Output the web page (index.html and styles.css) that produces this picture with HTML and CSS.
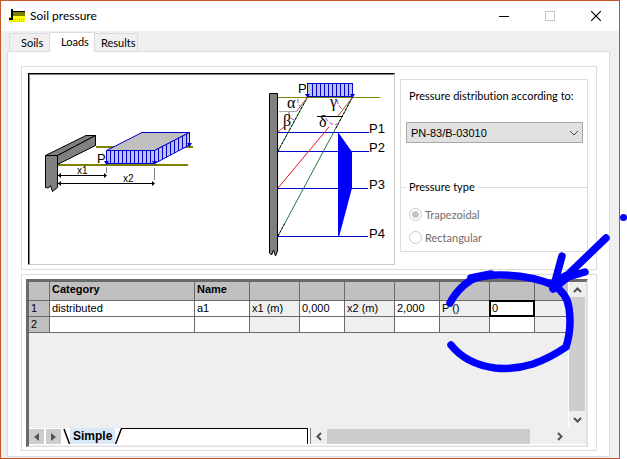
FILE: index.html
```html
<!DOCTYPE html>
<html lang="en">
<head>
<meta charset="utf-8">
<title>Soil pressure</title>
<link rel="stylesheet" href="styles.css">
</head>
<body>
<div class="window">
  <header class="titlebar">
    <svg class="app-icon" width="16" height="14" viewBox="0 0 16 14" shape-rendering="crispEdges" aria-hidden="true">
      <defs><pattern id="soil" width="2" height="2" patternUnits="userSpaceOnUse"><rect width="2" height="2" fill="#ff0"/><rect width="1" height="1" fill="#c8c820"/></pattern></defs>
      <rect y="8" width="16" height="5" fill="url(#soil)"/>
      <rect x="4" y="7" width="12" height="3" fill="#ff0"/>
      <rect x="4" y="2" width="12" height="5" fill="#808000"/>
      <rect x="4" y="2" width="12" height="1" fill="#000"/>
      <rect x="2" y="0" width="2" height="10" fill="#000"/>
      <rect x="0" y="9" width="4" height="2" fill="#000"/>
    </svg>
    <h1 class="title">Soil pressure</h1>
    <div class="window-buttons">
      <button class="window-button" aria-label="Minimize"><svg width="10" height="10" viewBox="0 0 10 10"><path d="M0 5.500H10" stroke="#000"/></svg></button>
      <button class="window-button" aria-label="Maximize" disabled><svg width="10" height="10" viewBox="0 0 10 10"><rect x=".5" y=".5" width="9" height="9" fill="none" stroke="#c4c4c4"/></svg></button>
      <button class="window-button" aria-label="Close"><svg width="10" height="10" viewBox="0 0 10 10"><path d="M0 0L10 10M10 0L0 10" stroke="#000" stroke-width="1.200"/></svg></button>
    </div>
  </header>

  <nav class="tabs" role="tablist">
    <button class="tab" role="tab">Soils</button>
    <button class="tab tab-active" role="tab" aria-selected="true">Loads</button>
    <button class="tab" role="tab">Results</button>
  </nav>

  <main class="panel">
    <section class="box scheme">
      <div class="picture">
        <svg class="drawing" viewBox="29 74 365 190" preserveAspectRatio="xMinYMin meet" aria-label="Load scheme">
          <g shape-rendering="crispEdges" stroke="#808000" stroke-width="2" fill="none">
            <path d="M58 165H188M96 147H193"/>
          </g>
          <g stroke="#000" fill="#808080">
            <path d="M45.500 155.500L86 135.500H95.500L57.500 155.500Z"/>
            <path d="M57.500 155.500L95.500 135.500V145.500L57.500 164.500Z"/>
            <path d="M45.500 155.500H57.500V187.500L52.500 191.500L50.500 185.500L48.500 188L45.500 187.500Z"/>
          </g>
          <g stroke="#0000d0" fill="#c0c0e0">
            <path d="M106.500 150.500L142 132.500H189.500L154.500 150.500Z" fill="#c0c0c0"/>
            <path d="M154.500 150.500L189.500 132.500V145L154.500 163.500Z"/>
            <path d="M106.500 150.500H154.500V163.500H106.500Z"/>
            <path shape-rendering="crispEdges" d="M110.500 150V164M114.500 150V164M118.500 150V164M122.500 150V164M126.500 150V164M130.500 150V164M134.500 150V164M138.500 150V164M142.500 150V164M146.500 150V164M150.500 150V164"/>
            <path d="M158.500 148.500V161.500M162.500 146.500V159.500M166.500 144.500V157.500M170.500 142.500V155M174.500 140.500V153M178.500 138V151M182.500 136V149M186.500 134V147"/>
          </g>
          <path fill="#0000d0" d="M104 161H109L106.500 165ZM152 161H157L154.500 165ZM187 143H192L189.500 147Z"/>
          <g shape-rendering="crispEdges" stroke="#808080"><path d="M106.500 167V173M154.500 168V180"/></g>
          <path stroke="#000" d="M58 175.500H106M58 183.500H154"/>
          <path d="M58 175.500L61 173V178ZM107 175.500L104 173V178ZM58 183.500L61 181V186ZM155 183.500L152 181V186Z"/>
          <text class="label" x="97" y="163">P</text>
          <text class="label-small" x="77" y="174">x1</text>
          <text class="label-small" x="123" y="182">x2</text>

          <path d="M269.500 93.500H277.500V251L275.500 256L273.500 250L271.500 255L269.500 253Z" fill="#808080" stroke="#000"/>
          <path d="M278 97.500H380" stroke="#808000"/>
          <g stroke="#0000d0" fill="#c0c0e0" shape-rendering="crispEdges">
            <rect x="307.500" y="83.500" width="45" height="13"/>
            <path d="M312.500 84V97M316.500 84V97M320.500 84V97M324.500 84V97M328.500 84V97M332.500 84V97M336.500 84V97M340.500 84V97M344.500 84V97M348.500 84V97"/>
            <path d="M278 132.500H369M278 151.500H369M278 188.500H368M278 236.500H368"/>
          </g>
          <path fill="#0000d0" d="M305 94H310L307.500 98ZM350 94H355L352.500 98Z"/>
          <path d="M338 132L352 152V188L339 237H338Z" fill="#00f"/>
          <g fill="none">
            <path d="M278 151L307 98M278 236L352 98" stroke="#207838"/>
            <path d="M278 151L307 98M278 236L285 223M336 128L352 98" stroke="#000" stroke-dasharray="2 2"/>
            <path d="M278 188L329 127" stroke="#e01028"/>
            <path d="M338 116L352 98M296 112L307 98M278 132L284 127" stroke="#b85030"/>
            <path d="M279 111.500H297" stroke="#b0a8b0"/>
            <path d="M317 116.500H343" stroke="#000"/>
            <path d="M298 99Q297 104 301 107M289 112Q289 118 294 120M337 100Q338 106 343 110M326 118Q329 126 339 124" stroke="#c030b8" stroke-dasharray="4 2"/>
          </g>
          <text class="label" x="298" y="93">P</text>
          <text class="greek" x="287" y="108">α</text>
          <text class="greek" x="283" y="126">β</text>
          <text class="greek" x="330" y="107">γ</text>
          <text class="greek" x="319" y="127">δ</text>
          <text class="label" x="369" y="133">P1</text>
          <text class="label" x="369" y="152">P2</text>
          <text class="label" x="369" y="189">P3</text>
          <text class="label" x="369" y="238">P4</text>
        </svg>
      </div>
      <div class="options">
        <div class="method">
          <label for="norm">Pressure distribution according to:</label>
          <div class="select-wrap">
            <select id="norm"><option>PN-83/B-03010</option></select>
            <svg class="chevron" width="10" height="6" viewBox="0 0 10 6"><path d="M1 1L5 5L9 1" fill="none" stroke="#444"/></svg>
          </div>
        </div>
        <fieldset class="types" disabled>
          <legend>Pressure type</legend>
          <label class="radio"><input type="radio" name="type" checked>Trapezoidal</label>
          <label class="radio"><input type="radio" name="type">Rectangular</label>
        </fieldset>
      </div>
    </section>

    <section class="box loads">
      <div class="grid-frame">
        <div class="grid-view">
          <table class="grid">
            <colgroup><col class="c-index"><col class="c-category"><col class="c-name"><col class="c-label"><col class="c-value"><col class="c-label"><col class="c-value"><col class="c-label"><col class="c-value"><col></colgroup>
            <thead>
              <tr><th></th><th>Category</th><th>Name</th><th></th><th></th><th></th><th></th><th></th><th></th><th></th></tr>
            </thead>
            <tbody>
              <tr><td class="index">1</td><td>distributed</td><td>a1</td><td class="locked">x1 (m)</td><td>0,000</td><td class="locked">x2 (m)</td><td>2,000</td><td class="locked">P ()</td><td class="editing"><input class="cell-input" aria-label="P" value="0"></td><td class="locked"></td></tr>
              <tr><td class="index">2</td><td></td><td></td><td class="locked"></td><td></td><td class="locked"></td><td></td><td class="locked"></td><td></td><td class="locked"></td></tr>
            </tbody>
          </table>
          <div class="vscroll">
            <button class="arrow" aria-label="Scroll up"><svg width="9" height="6" viewBox="0 0 9 6"><path d="M1 5L4.500 1.500L8 5"/></svg></button>
            <div class="vthumb"></div>
            <button class="arrow" aria-label="Scroll down"><svg width="9" height="6" viewBox="0 0 9 6"><path d="M1 1L4.500 4.500L8 1"/></svg></button>
          </div>
        </div>
        <div class="sheetbar">
          <div class="sheets">
            <button class="sheet-nav" aria-label="Previous sheet"><svg width="5" height="8" viewBox="0 0 5 8"><path d="M5 0V8L0 4Z" fill="#555"/></svg></button>
            <button class="sheet-nav" aria-label="Next sheet"><svg width="5" height="8" viewBox="0 0 5 8"><path d="M0 0V8L5 4Z" fill="#555"/></svg></button>
            <svg class="slant" width="7" height="16" viewBox="0 0 7 16"><path d="M1 1L6.500 16" stroke="#000" stroke-width="1.500"/></svg>
            <button class="sheet">Simple</button>
            <svg class="slant" width="7" height="16" viewBox="0 0 7 16"><path d="M.5 16L6.500 .5H7" fill="none" stroke="#000" stroke-width="1.500"/></svg>
            <div class="sheet-rest"></div>
          </div>
          <div class="hscroll">
            <button class="arrow" aria-label="Scroll left"><svg width="6" height="9" viewBox="0 0 6 9"><path d="M5 1L1.500 4.500L5 8"/></svg></button>
            <div class="htrack"><div class="hthumb"></div></div>
            <button class="arrow" aria-label="Scroll right"><svg width="6" height="9" viewBox="0 0 6 9"><path d="M1 1L4.500 4.500L1 8"/></svg></button>
          </div>
          <div class="corner"></div>
        </div>
      </div>
    </section>
  </main>
</div>
<svg class="annotation" width="627" height="459" viewBox="0 0 627 459" aria-hidden="true">
  <g fill="none" stroke="#00f" stroke-width="7.500" stroke-linecap="round" stroke-linejoin="round">
    <path d="M450 303Q457 289 471 280Q482 275 500 275Q530 275 553 285Q567 293 569 308Q572 328 566 347Q550 358 533 364Q514 370 495 368Q466 364 451 345"/>
    <path d="M471 278Q480 276 491 274"/>
    <path d="M606 238L553 289L562 256M553 289L568 277L585 272M556 281L567 275"/>
  </g>
  <circle cx="623.500" cy="217.500" r="3.500" fill="#00f"/>
</svg>
</body>
</html>
```
FILE: styles.css
```css
* { box-sizing: border-box; }

body {
  margin: 0;
  padding-right: 7px;
  position: relative;
  overflow: hidden;
  background: #fff;
  color: #000;
  font: 11px/14px Lato, "Liberation Sans", sans-serif;
  font-variant-ligatures: none;
}

button, select, input { font: inherit; color: inherit; margin: 0; }
button { border: 0; padding: 0; background: none; }
svg { display: block; }

.window {
  display: flex;
  flex-direction: column;
  min-height: 100vh;
  border: 1px solid #c4542c;
  background: #efefef;
}

.titlebar {
  display: flex;
  align-items: center;
  height: 30px;
  padding-left: 8px;
  background: #fff;
}
.title { flex: 1; margin: 0 0 0 5px; font-size: 12px; font-weight: 400; }
.window-buttons { display: flex; }
.window-button { display: grid; place-items: center; width: 46px; height: 28px; }

.tabs { display: flex; align-items: flex-end; height: 20px; padding-left: 8px; }
.tab {
  min-width: 41px;
  height: 18px;
  padding: 0 0 0 11px;
  border: 1px solid #dcdcdc;
  border-bottom: 0;
  background: #f0f0f0;
  text-align: left;
}
.tab:last-child { min-width: 43px; padding: 0 0 0 6px; border-left: 0; }
.tab-active {
  position: relative;
  min-width: 45px;
  height: 20px;
  margin-bottom: -1px;
  padding-bottom: 1px;
  border-left: 0;
  background: #fff;
}

.panel {
  flex: 1;
  display: flex;
  flex-direction: column;
  gap: 4px;
  margin: 0 9px 1px 6px;
  padding: 14px 12px 5px 13px;
  border: 1px solid #dcdcdc;
  background: #fff;
}
.box { border: 1px solid #dcdcdc; }

.scheme { display: flex; gap: 5px; padding: 6px 8px 4px 6px; }
.picture {
  flex: 1;
  border: 1px solid #c8c8c8;
  border-top-color: #000;
  border-left-color: #000;
  box-shadow: inset 1px 1px #808080;
}
.drawing { width: 100%; height: 190px; }
.label { font: 13px "Liberation Sans", sans-serif; }
.label-small { font: 10px "Liberation Sans", sans-serif; }
.greek { font: 16px "Liberation Serif", serif; }

.options { width: 188px; margin: 6px 0 13px; border: 1px solid #dcdcdc; display: flex; flex-direction: column; }
.method { flex: 1; padding: 9px 4px 0 5px; }
.method label { display: block; padding-left: 3px; }
.select-wrap { position: relative; margin-top: 19px; }
.select-wrap select {
  appearance: none;
  display: block;
  width: 100%;
  height: 21px;
  padding: 0 20px 0 4px;
  border: 1px solid #a8a8a8;
  border-radius: 0;
  background: #e1e1e1;
  font-family: "Liberation Sans", sans-serif;
}
.chevron { position: absolute; right: 4px; top: 8px; pointer-events: none; }

.types { margin: 0; padding: 9px 0 2px 8px; border: 0; border-top: 1px solid #dcdcdc; color: #6d6d6d; }
.types legend { margin-left: -3px; padding: 0 3px; color: #000; }
.radio { display: flex; align-items: center; gap: 3px; height: 23px; }
.radio input {
  appearance: none;
  width: 13px;
  height: 13px;
  border: 1px solid #c8c8c8;
  border-radius: 50%;
  background: #fff;
}
.radio input:checked { background: radial-gradient(circle, #c4c4c4 3px, #fff 4px); }

.loads { flex: 1; display: flex; padding: 4px 8px 3px 4px; }
.grid-frame {
  flex: 1;
  display: flex;
  flex-direction: column;
  min-width: 0;
  padding-bottom: 1px;
  border: 1px solid #e0e0e0;
  border-top: 3px solid #6a6a6a;
  border-left: 3px solid #6a6a6a;
  border-right-width: 2px;
  background: #efefef;
  font-family: "Liberation Sans", sans-serif;
}
.grid-view { flex: 1; display: flex; align-items: flex-start; min-height: 145px; }
.grid { flex: 1; width: 100%; table-layout: fixed; border-collapse: separate; border-spacing: 0; }
.c-index { width: 21px; }
.c-category { width: 145px; }
.c-name { width: 55px; }
.c-label { width: 50px; }
.c-value { width: 45px; }
.grid th, .grid td {
  height: 16px;
  padding: 0 2px;
  border: solid #6a6a6a;
  border-width: 0 1px 1px 0;
  background: #fff;
  line-height: 15px;
  text-align: left;
  white-space: nowrap;
}
.grid th:last-child, .grid td:last-child { border-right: 0; }
.grid th { height: 19px; padding-bottom: 3px; background: #c0c0c0; }
.grid .index { background: #c0c0c0; }
.grid .locked { background: #efefef; }
.grid .editing { padding: 0; }
.cell-input {
  display: block;
  width: 100%;
  height: 15px;
  padding: 0 2px;
  border: 0;
  outline: 2px solid #000;
  outline-offset: -1px;
  background: #fff;
}

.vscroll { display: flex; flex-direction: column; align-self: stretch; width: 18px; border-left: 1px solid #fff; padding: 0 1px 1px 0; }
.arrow { display: grid; place-items: center; width: 16px; height: 15px; }
.arrow path { fill: none; stroke: #505050; stroke-width: 2; }
.vthumb { flex: 1; margin-bottom: 1px; background: #cdcdcd; }

.sheetbar { display: flex; height: 17px; border-bottom: 1px solid #fff; }
.sheets { display: flex; flex: 282; background: #fff; }
.sheet-nav { display: grid; place-items: center; width: 15px; height: 15px; margin: 1px 2px 0 0; background: #cdcdcd; }
.sheet { padding: 0 3px; background: #d8e8f6; font-weight: 700; font-size: 12px; }
.sheet-rest { flex: 1; margin-right: 2px; border: solid #000; border-width: 1px 1px 0 0; }
.hscroll { display: flex; flex: 257; padding-top: 1px; border-left: 1px solid #808080; }
.htrack { flex: 1; }
.hthumb { width: 90%; height: 15px; background: #cdcdcd; }
.corner { width: 18px; }

.annotation { position: absolute; left: 0; top: 0; pointer-events: none; }
```
